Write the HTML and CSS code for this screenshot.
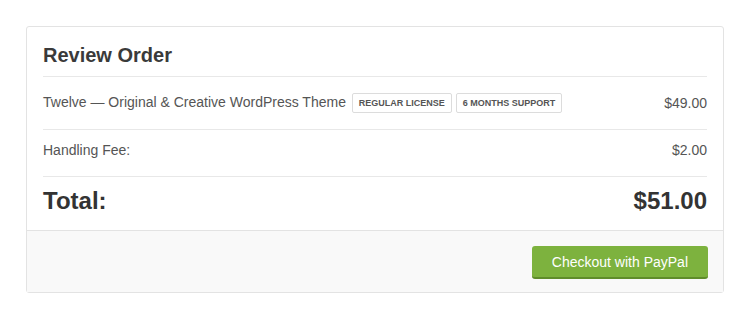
FILE: index.html
```html
<!DOCTYPE html>
<html lang="en">
  <head>
    <meta charset="UTF-8" />
    <meta name="viewport" content="width=device-width, initial-scale=1.0" />
    <title>Review Order</title>
    <link rel="stylesheet" href="styles.css">
  </head>
  <body>
    <div class="order-box">
      <div class="order-body">
        <h2 class="order-title">Review Order</h2>
        <div class="order-row item-row">
          <span class="item-name">Twelve — Original &amp; Creative WordPress Theme <span class="tag">Regular License</span> <span class="tag">6 Months Support</span></span>
          <span class="price">$49.00</span>
        </div>
        <div class="order-row fee-row">
          <span>Handling Fee:</span>
          <span class="price">$2.00</span>
        </div>
        <div class="order-row total-row">
          <span>Total:</span>
          <span>$51.00</span>
        </div>
      </div>
      <div class="order-footer">
        <button class="checkout-btn">Checkout with PayPal</button>
      </div>
    </div>
  </body>
</html>
```

FILE: styles.css
```css
body {
  font-family: "Liberation Sans", Arial, sans-serif;
  margin: 0;
  padding: 26px 20px 0 26px;
  background: #fff;
  color: #555;
}
.order-box {
  width: 696px;
  border: 1px solid #e3e3e3;
  border-radius: 3px;
}
.order-body {
  padding: 0 16px;
}
.order-title {
  margin: 0;
  padding: 16px 0 9px;
  font-size: 20px;
  line-height: 24px;
  color: #3a3a3a;
  border-bottom: 1px solid #e8e8e8;
}
.order-row {
  display: flex;
  justify-content: space-between;
  align-items: center;
  font-size: 14px;
  line-height: 20px;
  border-bottom: 1px solid #e8e8e8;
}
.item-row {
  padding: 15px 0 16px;
}
.fee-row {
  padding: 10px 0 16px;
}
.total-row {
  padding: 10px 0 15px;
  font-size: 24px;
  line-height: 28px;
  font-weight: bold;
  color: #333;
  border-bottom: none;
}
.tag {
  display: inline-block;
  margin-left: 2px;
  padding: 0 6px;
  font-size: 9px;
  line-height: 18px;
  font-weight: bold;
  text-transform: uppercase;
  color: #555;
  border: 1px solid #dcdcdc;
  border-radius: 2px;
  vertical-align: 1px;
}
.tag + .tag {
  margin-left: 0;
}
.order-footer {
  display: flex;
  justify-content: flex-end;
  padding: 15px 15px 13px;
  background: #f9f9f9;
  border-top: 1px solid #e3e3e3;
}
.checkout-btn {
  padding: 8px 20px 7px;
  font-family: inherit;
  font-size: 14px;
  line-height: 16px;
  color: #fff;
  background: #7db23e;
  border: none;
  border-bottom: 2px solid #5f8c2b;
  border-radius: 3px;
  cursor: pointer;
}
```
